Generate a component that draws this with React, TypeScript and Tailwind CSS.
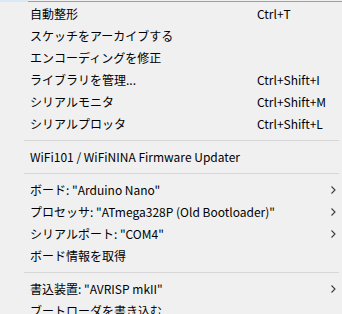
type Item =
  | { kind: "item"; label: string; shortcut?: string; sub?: boolean }
  | { kind: "sep" };

const items: Item[] = [
  { kind: "item", label: "自動整形", shortcut: "Ctrl+T" },
  { kind: "item", label: "スケッチをアーカイブする" },
  { kind: "item", label: "エンコーディングを修正" },
  { kind: "item", label: "ライブラリを管理...", shortcut: "Ctrl+Shift+I" },
  { kind: "item", label: "シリアルモニタ", shortcut: "Ctrl+Shift+M" },
  { kind: "item", label: "シリアルプロッタ", shortcut: "Ctrl+Shift+L" },
  { kind: "sep" },
  { kind: "item", label: "WiFi101 / WiFiNINA Firmware Updater" },
  { kind: "sep" },
  { kind: "item", label: 'ボード: "Arduino Nano"', sub: true },
  { kind: "item", label: 'プロセッサ: "ATmega328P (Old Bootloader)"', sub: true },
  { kind: "item", label: 'シリアルポート: "COM4"', sub: true },
  { kind: "item", label: "ボード情報を取得" },
  { kind: "sep" },
  { kind: "item", label: '書込装置: "AVRISP mkII"', sub: true },
  { kind: "item", label: "ブートローダを書き込む" },
];

function Chevron() {
  return (
    <svg width="5" height="8" viewBox="0 0 5 8" className="text-[#3c3c3c]">
      <path d="M0.5 0.5 L4 4 L0.5 7.5" fill="none" stroke="currentColor" strokeWidth="1.1" />
    </svg>
  );
}

export default function App() {
  return (
    <div
      className="h-[314px] w-[342px] overflow-hidden bg-[#f0f0f0] text-[12px] text-black"
      style={{ fontFamily: '"Noto Sans CJK JP", "Noto Sans", sans-serif' }}
    >
      <div className="flex h-[2px]">
        <div className="w-[28px] bg-[#dbe9f7]" />
        <div className="flex flex-1 flex-col">
          <div className="h-px bg-[#f0f0f0]" />
          <div className="h-px bg-[#a0a0a0]" />
        </div>
      </div>
      <div className="flex flex-col pt-px">
        {items.map((it, i) =>
          it.kind === "sep" ? (
            <div key={i} className="flex h-[11px] items-center pl-[24px] pr-[3px]">
              <div className="h-px flex-1 bg-[#d7d7d7]" />
            </div>
          ) : (
            <div key={i} className="flex h-[22px] items-center pl-[30px] pr-[6px] leading-none">
              <span className="flex-1 whitespace-nowrap">{it.label}</span>
              {it.shortcut && <span className="w-[79px] whitespace-nowrap">{it.shortcut}</span>}
              {it.sub && <Chevron />}
            </div>
          )
        )}
      </div>
    </div>
  );
}
